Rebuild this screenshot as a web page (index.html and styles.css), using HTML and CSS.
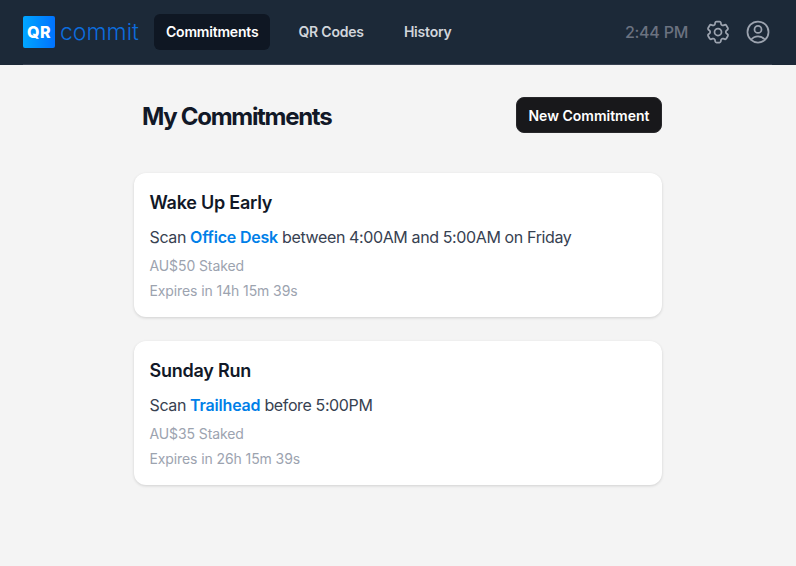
FILE: index.html
```html
<!DOCTYPE html>
<html lang="en">

<head>
    <meta charset="UTF-8">
    <meta name="viewport" content="width=device-width, initial-scale=1.0">
    <title>QR Commit</title>
    <link rel="stylesheet" href="styles.css">
</head>

<body>
    <header class="topbar">
        <div class="topbar-inner">
            <div class="brand">
                <span class="brand-mark">QR</span>
                <span class="brand-name">commit</span>
            </div>
            <nav class="nav">
                <a class="nav-link active" href="#">Commitments</a>
                <a class="nav-link" href="#">QR Codes</a>
                <a class="nav-link" href="#">History</a>
            </nav>
            <div class="topbar-right">
                <span class="clock">2:44 PM</span>
                <svg class="icon" viewBox="0 0 24 24" fill="none" stroke="currentColor" stroke-width="1.5" stroke-linecap="round" stroke-linejoin="round">
                    <path d="M9.594 3.94c.09-.542.56-.94 1.11-.94h2.593c.55 0 1.02.398 1.11.94l.213 1.281c.063.374.313.686.645.87.074.04.147.083.22.127.324.196.72.257 1.075.124l1.217-.456a1.125 1.125 0 0 1 1.37.49l1.296 2.247a1.125 1.125 0 0 1-.26 1.431l-1.003.827c-.293.24-.438.613-.431.992a6.759 6.759 0 0 1 0 .255c-.007.378.138.75.43.99l1.005.828c.424.35.534.954.26 1.43l-1.298 2.247a1.125 1.125 0 0 1-1.369.491l-1.217-.456c-.355-.133-.75-.072-1.076.124a6.57 6.57 0 0 1-.22.128c-.331.183-.581.495-.644.869l-.213 1.28c-.09.543-.56.941-1.11.941h-2.594c-.55 0-1.02-.398-1.11-.94l-.213-1.281c-.062-.374-.312-.686-.644-.87a6.52 6.52 0 0 1-.22-.127c-.325-.196-.72-.257-1.076-.124l-1.217.456a1.125 1.125 0 0 1-1.369-.49l-1.297-2.247a1.125 1.125 0 0 1 .26-1.431l1.004-.827c.292-.24.437-.613.43-.992a6.932 6.932 0 0 1 0-.255c.007-.378-.138-.75-.43-.99l-1.004-.828a1.125 1.125 0 0 1-.26-1.43l1.297-2.247a1.125 1.125 0 0 1 1.37-.491l1.216.456c.356.133.751.072 1.076-.124.072-.044.146-.087.22-.128.332-.183.582-.495.644-.869l.214-1.281Z" />
                    <path d="M15 12a3 3 0 1 1-6 0 3 3 0 0 1 6 0Z" />
                </svg>
                <svg class="icon" viewBox="0 0 24 24" fill="none" stroke="currentColor" stroke-width="1.5" stroke-linecap="round" stroke-linejoin="round">
                    <path d="M17.982 18.725A7.488 7.488 0 0 0 12 15.75a7.488 7.488 0 0 0-5.982 2.975m11.963 0a9 9 0 1 0-11.963 0m11.963 0A8.966 8.966 0 0 1 12 21a8.966 8.966 0 0 1-5.982-2.275M15 9.75a3 3 0 1 1-6 0 3 3 0 0 1 6 0Z" />
                </svg>
            </div>
        </div>
    </header>

    <main class="content">
        <div class="page-head">
            <h1>My Commitments</h1>
            <button class="new-btn" type="button">New Commitment</button>
        </div>

        <section class="card">
            <h2>Wake Up Early</h2>
            <p class="task">Scan <a href="#">Office Desk</a> between 4:00AM and 5:00AM on Friday</p>
            <p class="meta">AU$50 Staked</p>
            <p class="meta">Expires in 14h 15m 39s</p>
        </section>

        <section class="card">
            <h2>Sunday Run</h2>
            <p class="task">Scan <a href="#">Trailhead</a> before 5:00PM</p>
            <p class="meta">AU$35 Staked</p>
            <p class="meta">Expires in 26h 15m 39s</p>
        </section>
    </main>
</body>

</html>
```

FILE: styles.css
```css
body {
    font-family: Inter, "Liberation Sans", sans-serif;
    background-color: #f4f4f4;
    color: #111827;
    margin: 0;
    padding: 0;
}

.topbar {
    padding: 0 24px 0 23px;
    background: #1c2938;
}

.topbar-inner {
    display: flex;
    align-items: center;
    height: 65px;
    box-sizing: border-box;
    border-bottom: 1px solid #374151;
}

.brand {
    display: flex;
    align-items: center;
    gap: 5px;
}

.brand-mark {
    display: flex;
    align-items: center;
    justify-content: center;
    width: 32px;
    height: 32px;
    border-radius: 2px;
    background: linear-gradient(90deg, #00a6ff, #0072ff);
    color: #fff;
    font-size: 16px;
    font-weight: 800;
    letter-spacing: 0.5px;
}

.brand-name {
    width: 78px;
    font-size: 23px;
    font-weight: 300;
    white-space: nowrap;
    color: #0d6cdc;
}

.nav {
    display: flex;
    gap: 16px;
    margin-left: 16px;
}

.nav-link {
    padding: 0 12px;
    line-height: 36px;
    border-radius: 6px;
    color: #d1d5db;
    font-size: 14px;
    font-weight: 600;
    letter-spacing: -0.2px;
    text-decoration: none;
}

.nav-link.active {
    background: #0f1723;
    color: #fff;
}

.topbar-right {
    display: flex;
    align-items: center;
    gap: 12px;
    margin-left: auto;
    color: #9ca3af;
}

.clock {
    margin-right: 4px;
    font-size: 16px;
    font-weight: 500;
    letter-spacing: -0.25px;
    color: #6b7280;
}

.icon {
    width: 28px;
    height: 28px;
}

.content {
    width: 528px;
    margin: 0 auto;
    padding-top: 32px;
}

.page-head {
    display: flex;
    align-items: flex-start;
    justify-content: space-between;
    height: 36px;
    padding-left: 8px;
    margin-bottom: 40px;
}

.page-head h1 {
    margin: 0;
    font-size: 24px;
    font-weight: 700;
    letter-spacing: -1.3px;
    line-height: 39px;
}

.new-btn {
    height: 36px;
    padding: 0 11.5px;
    background: #18181b;
    color: #fff;
    border: 1px solid #27272a;
    border-radius: 8px;
    font-family: inherit;
    font-size: 14px;
    font-weight: 600;
    cursor: pointer;
}

.card {
    box-sizing: border-box;
    height: 144px;
    margin-bottom: 24px;
    padding: 16px 16px 16px 15.5px;
    background: #fff;
    border-radius: 12px;
    box-shadow: 0 1px 3px rgba(0, 0, 0, 0.15);
}

.card h2 {
    margin: 0 0 8px;
    font-size: 18px;
    font-weight: 600;
    letter-spacing: -0.25px;
    line-height: 28px;
}

.task {
    margin: 0 0 7px;
    font-size: 16px;
    letter-spacing: -0.38px;
    line-height: 24px;
    color: #374151;
}

.task a {
    color: #007fe8;
    font-weight: 600;
    letter-spacing: -0.2px;
    text-decoration: none;
}

.meta {
    margin: 0 0 5px;
    font-size: 14px;
    letter-spacing: -0.1px;
    line-height: 20px;
    color: #9ca3af;
}
```
